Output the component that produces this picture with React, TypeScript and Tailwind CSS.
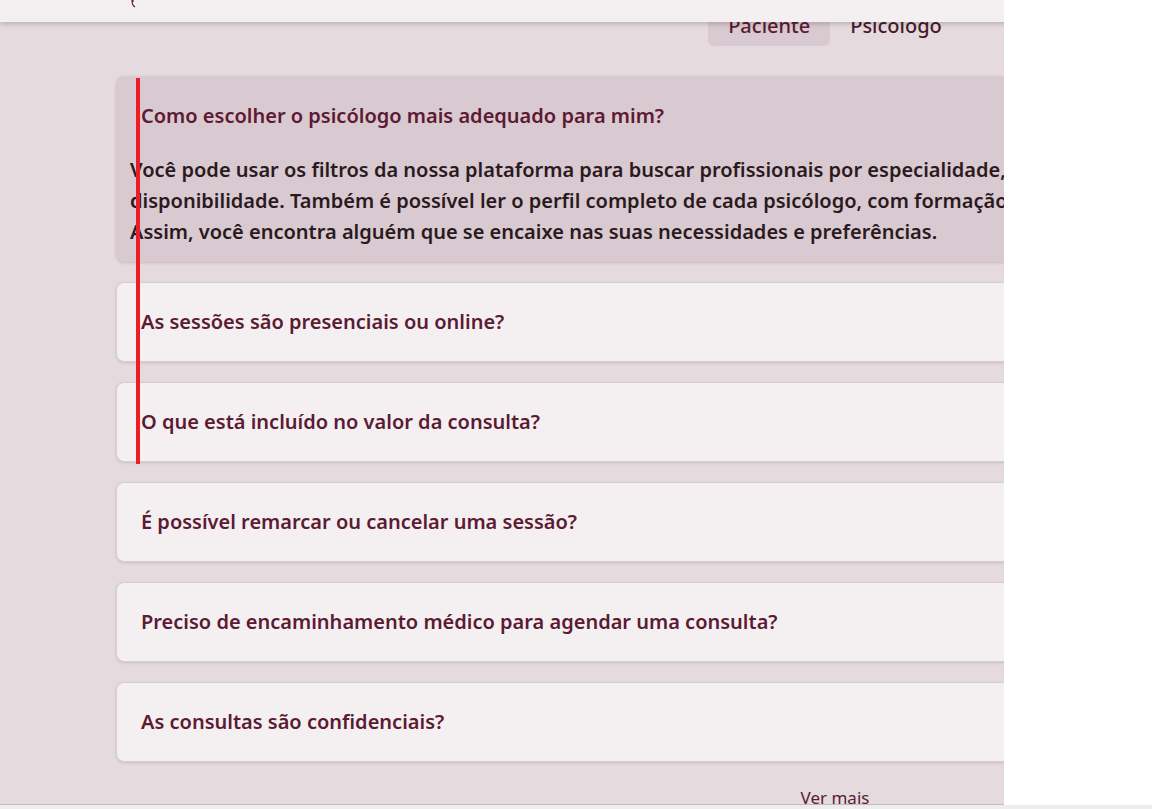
import React from 'react';

const faqs = [
  'As sessões são presenciais ou online?',
  'O que está incluído no valor da consulta?',
  'É possível remarcar ou cancelar uma sessão?',
  'Preciso de encaminhamento médico para agendar uma consulta?',
  'As consultas são confidenciais?',
];

export default function App() {
  return (
    <div className="w-[1152px] h-[809px] bg-white overflow-hidden" style={{ fontFamily: '"Noto Sans", Lato, sans-serif' }}>
      <div className="w-[1004px] h-[805px] overflow-hidden relative bg-[#e5dbdf] border-b border-[#c4bcbf]">
        <div className="w-[1670px]">
          {/* header (page is scrolled, only its bottom shows) */}
          <header className="relative z-10 h-[22px] bg-[#f4f0f1] shadow-[0_2px_5px_rgba(0,0,0,0.2)]">
            <svg className="absolute left-[130px] top-0" width="10" height="8" viewBox="0 0 10 8">
              <path d="M2 0 C2 4 3 6 5 7 M3 0 L3 2" stroke="#6b1f3a" strokeWidth="1.2" fill="none" />
            </svg>
          </header>

          <div className="flex justify-center -mt-[22px]">
            <div className="flex">
              <button className="px-5 h-[46px] pt-[5px] self-start leading-[26px] rounded-md bg-[#d9c9d0] text-[20px] font-medium text-[#5c1a33]">
                Paciente
              </button>
              <button className="px-5 h-[46px] pt-[5px] self-start leading-[26px] text-[20px] font-medium text-[#4a1a2c]">
                Psicólogo
              </button>
            </div>
          </div>

          <div className="px-[116px] pt-[30px] flex flex-col gap-5">
            <div className="rounded-lg bg-[#d9c9d0] shadow-[0_1px_3px_rgba(0,0,0,0.15)]">
              <div className="h-[80px] flex items-center pl-[25px] text-[20px] font-semibold text-[#5c1a33]">
                Como escolher o psicólogo mais adequado para mim?
              </div>
              <p className="-mt-[2px] pl-[14px] pb-[15px] text-[20px] leading-[31px] font-semibold text-[#2a1a20] whitespace-nowrap">
                Você pode usar os filtros da nossa plataforma para buscar profissionais por especialidade, abordagem, valor e
                <br />
                disponibilidade. Também é possível ler o perfil completo de cada psicólogo, com formação e experiência.
                <br />
                Assim, você encontra alguém que se encaixe nas suas necessidades e preferências.
              </p>
            </div>
            {faqs.map((q) => (
              <div key={q} className="h-[80px] rounded-lg bg-[#f4f0f1] border border-[#d6cdd1] shadow-[0_1px_3px_rgba(0,0,0,0.12)] flex items-center pl-[24px] text-[20px] font-semibold text-[#5c1a33]">
                {q}
              </div>
            ))}
          </div>

          <div className="flex justify-center pt-[25px]">
            <button className="text-[17px] leading-[22px] text-[#5c1a33]">Ver mais</button>
          </div>
        </div>

        {/* red marker line */}
        <div className="absolute left-[136px] top-[78px] w-[4px] h-[386px] bg-[#ee1c25]" />
      </div>
      <div className="h-[4px] bg-[#ededed]" />
    </div>
  );
}
